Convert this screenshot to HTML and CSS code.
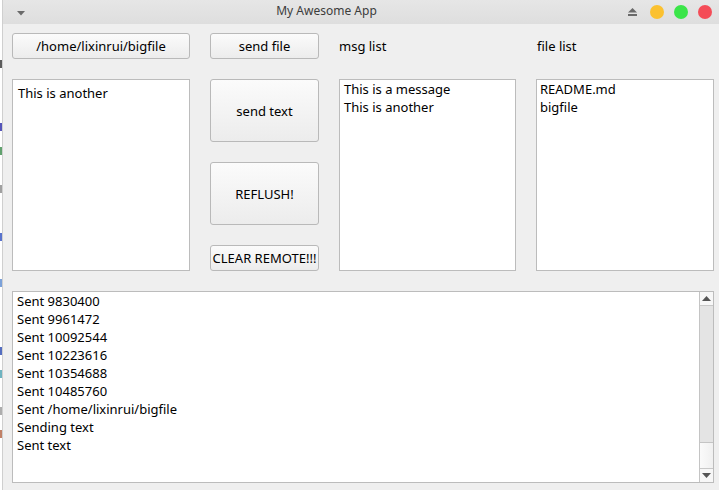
FILE: index.html
```html
<!DOCTYPE html>
<html>
<head>
<meta charset="utf-8">
<title>My Awesome App</title>
<link rel="stylesheet" href="styles.css">
</head>
<body>
<div class="screen">
  <div class="strip">
    <span class="frag f1"></span>
    <span class="frag f2"></span>
    <span class="frag f3"></span>
    <span class="frag f4"></span>
    <span class="frag f5"></span>
    <span class="frag f6"></span>
    <span class="frag f7"></span>
    <span class="frag f8"></span>
    <span class="frag f9"></span>
    <span class="frag f10"></span>
  </div>
  <div class="window">
    <div class="titlebar">
      <svg class="menu-arrow" width="8" height="5" viewBox="0 0 8 5"><path d="M0 0H8L4 4.5Z" fill="#6a6a6a"/></svg>
      <span class="title">My Awesome App</span>
      <svg class="eject" width="9" height="8" viewBox="0 0 9 8"><path d="M4.5 0L9 4.5H0Z" fill="#6a6a6a"/><rect x="0" y="6" width="9" height="2" fill="#6a6a6a"/></svg>
      <span class="dot yellow"></span>
      <span class="dot green"></span>
      <span class="dot red"></span>
    </div>
    <div class="content">
      <button class="btn">/home/lixinrui/bigfile</button>
      <button class="btn">send file</button>
      <div class="label">msg list</div>
      <div class="label label-file">file list</div>

      <div class="box textbox">This is another</div>
      <div class="btn-col">
        <button class="btn btn-tall">send text</button>
        <button class="btn btn-tall">REFLUSH!</button>
        <button class="btn btn-small">CLEAR REMOTE!!!</button>
      </div>
      <div class="box listbox msgs">
        <div>This is a message</div>
        <div>This is another</div>
      </div>
      <div class="box listbox files">
        <div>README.md</div>
        <div>bigfile</div>
      </div>

      <div class="box logbox">
        <div class="log">
          <div>Sent 9830400</div>
          <div>Sent 9961472</div>
          <div>Sent 10092544</div>
          <div>Sent 10223616</div>
          <div>Sent 10354688</div>
          <div>Sent 10485760</div>
          <div>Sent /home/lixinrui/bigfile</div>
          <div>Sending text</div>
          <div>Sent text</div>
        </div>
        <div class="scrollbar">
          <div class="sb-btn sb-up"><svg width="9" height="5" viewBox="0 0 9 5"><path d="M4.5 0L9 5H0Z" fill="#555"/></svg></div>
          <div class="sb-thumb"></div>
          <div class="sb-track"></div>
          <div class="sb-btn sb-down"><svg width="9" height="5" viewBox="0 0 9 5"><path d="M0 0H9L4.5 5Z" fill="#555"/></svg></div>
        </div>
      </div>
    </div>
  </div>
</div>
</body>
</html>
```

FILE: styles.css
```css
html, body {
  margin: 0;
  padding: 0;
  background: #ffffff;
}

body {
  font-family: "Noto Sans", "Open Sans", sans-serif;
  font-size: 13px;
  color: #000;
}

.screen {
  display: flex;
  width: 719px;
  height: 490px;
  overflow: hidden;
}

.strip {
  width: 2px;
  flex: none;
  background: #ffffff;
  display: flex;
  flex-direction: column;
}

.frag {
  display: block;
  width: 2px;
  height: 8px;
  flex: none;
  opacity: 0.8;
}
.f1 { margin-top: 60px; background: #333; }
.f2 { margin-top: 55px; background: #2a2aa8; }
.f3 { margin-top: 16px; background: #3a8a4a; }
.f4 { margin-top: 30px; background: #888; }
.f5 { margin-top: 40px; background: #3050c0; }
.f6 { margin-top: 38px; background: #5a8ad0; }
.f7 { margin-top: 60px; background: #2a4ab0; }
.f8 { margin-top: 15px; background: #4aa0b0; }
.f9 { margin-top: 29px; background: #999; }
.f10 { margin-top: 15px; background: #b06040; }

.window {
  flex: 1;
  display: flex;
  flex-direction: column;
  border-left: 1px solid #cfcfcf;
  background: #efefef;
}

.titlebar {
  height: 24px;
  flex: none;
  display: flex;
  align-items: center;
  background: linear-gradient(#e6e6e6, #dedede);
  padding: 0 7px 0 14px;
}

.menu-arrow {
  flex: none;
  margin-top: 2px;
}

.title {
  flex: 1;
  text-align: center;
  font-size: 12px;
  color: #3c3c3c;
  line-height: 24px;
  margin-top: -2px;
}

.eject {
  flex: none;
  margin-right: 13px;
}

.dot {
  width: 14px;
  height: 14px;
  border-radius: 50%;
  flex: none;
  margin-left: 10px;
}
.eject + .dot { margin-left: 0; }
.yellow { background: #fbc130; }
.green { background: #3be549; }
.red { background: #f44c57; }

.content {
  flex: 1;
  display: grid;
  grid-template-columns: 178px 109px 177px 178px;
  grid-template-rows: 26px 192px 192px;
  column-gap: 20px;
  row-gap: 20px;
  padding: 9px 5px 0 9px;
  align-items: start;
}

.btn {
  font-family: "Noto Sans", "Open Sans", sans-serif;
  font-size: 13px;
  color: #000;
  height: 26px;
  width: 100%;
  margin: 0;
  padding: 0;
  border: 1px solid #b9b9b9;
  border-radius: 3px;
  background: linear-gradient(#fbfbfb, #ececec);
  white-space: nowrap;
  box-sizing: border-box;
}

.label {
  height: 26px;
  line-height: 26px;
}
.label-file { padding-left: 1px; }

.btn-col {
  display: flex;
  flex-direction: column;
  gap: 20px;
}
.btn-tall { height: 63px; }
.btn-small { height: 26px; }

.box {
  background: #fff;
  border: 1px solid #bcbcbc;
  box-sizing: border-box;
  height: 192px;
  line-height: 18px;
}

.textbox {
  padding: 4px 5px;
}

.listbox {
  padding: 0 4px;
}
.listbox.files { padding: 0 3px; }

.logbox {
  grid-column: 1 / -1;
  height: 192px;
  display: flex;
}

.log {
  flex: 1;
  padding: 0 4px;
}

.scrollbar {
  width: 14px;
  flex: none;
  box-sizing: border-box;
  border-left: 1px solid #c4c4c4;
  display: flex;
  flex-direction: column;
}

.sb-btn {
  height: 13px;
  flex: none;
  display: flex;
  align-items: center;
  justify-content: center;
  background: #f7f7f7;
}
.sb-up { border-bottom: 1px solid #c8c8c8; }
.sb-down { border-top: 1px solid #c8c8c8; }

.sb-thumb {
  height: 136px;
  flex: none;
  background: #e4e4e4;
  border-bottom: 1px solid #c4c4c4;
}

.sb-track {
  flex: 1;
  background: linear-gradient(90deg, #fafafa, #f0f0f0);
}
```
